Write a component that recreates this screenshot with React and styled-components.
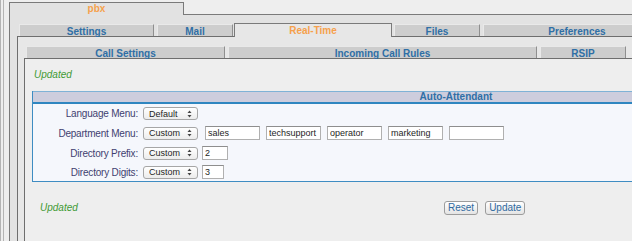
import styled, { createGlobalStyle } from 'styled-components';

const GlobalStyle = createGlobalStyle`
  html, body {
    margin: 0;
    padding: 0;
    overflow: hidden;
    background: #eeeeee;
  }
  body {
    font-family: "Liberation Sans", Arial, sans-serif;
  }
`;

const MAIN_TABS = [
  { label: 'Settings', w: 135 },
  { label: 'Mail', w: 76 },
  { label: 'Real-Time', w: 158, active: true },
  { label: 'Files', w: 86 },
  { label: 'Preferences', w: 188 },
];

const SUB_TABS = [
  { label: 'Call Settings', w: 199 },
  { label: 'Incoming Call Rules', w: 309 },
  { label: 'RSIP', w: 86 },
];

const DEPARTMENTS = ['sales', 'techsupport', 'operator', 'marketing', ''];

function Arrows() {
  return (
    <svg width="5" height="8" viewBox="0 0 5 8">
      <path d="M2.5 0.5 L4.5 3 L0.5 3 Z" fill="#444" />
      <path d="M2.5 7.5 L4.5 5 L0.5 5 Z" fill="#444" />
    </svg>
  );
}

function Select({ value }) {
  return (
    <SelectBox>
      <span>{value}</span>
      <Arrows />
    </SelectBox>
  );
}

function App() {
  return (
    <>
      <GlobalStyle />
      <Frame>
        <TabBar $indent={0} $top={0}>
          <Tab $w={175} $active $top>pbx</Tab>
        </TabBar>
        <Level1>
          <TabBar $indent={2} $top={8}>
            {MAIN_TABS.map((t) => (
              <Tab key={t.label} $w={t.w} $active={t.active}>{t.label}</Tab>
            ))}
          </TabBar>
          <Level2>
            <TabBar $indent={2} $top={9}>
              {SUB_TABS.map((t) => (
                <Tab key={t.label} $w={t.w}>{t.label}</Tab>
              ))}
            </TabBar>
            <Level3>
              <Status $indent={2}>Updated</Status>

              <Panel>
                <PanelHeader>Auto-Attendant</PanelHeader>
                <FormGrid>
                  <Label>Language Menu:</Label>
                  <Fields>
                    <Select value="Default" />
                  </Fields>

                  <Label>Department Menu:</Label>
                  <Fields>
                    <Select value="Custom" />
                    <InputGroup>
                      {DEPARTMENTS.map((d, i) => (
                        <TextInput key={i} $w={55} defaultValue={d} />
                      ))}
                    </InputGroup>
                  </Fields>

                  <Label>Directory Prefix:</Label>
                  <Fields>
                    <Select value="Custom" />
                    <TextInput $w={26} defaultValue="2" />
                  </Fields>

                  <Label>Directory Digits:</Label>
                  <Fields>
                    <Select value="Custom" />
                    <TextInput $w={22} defaultValue="3" />
                  </Fields>
                </FormGrid>
              </Panel>

              <Footer>
                <StatusCell>
                  <Status $indent={8}>Updated</Status>
                </StatusCell>
                <Buttons>
                  <Button>Reset</Button>
                  <Button>Update</Button>
                </Buttons>
              </Footer>
            </Level3>
          </Level2>
        </Level1>
      </Frame>
    </>
  );
}

const Frame = styled.div`
  width: 1000px;
  padding: 2px 0 0 5px;
  border-left: 4px double #b4b4b4;
`;

const TabBar = styled.div`
  display: flex;
  align-items: flex-end;
  gap: 3px;
  padding: ${(p) => p.$top}px 0 0 ${(p) => p.$indent}px;
  position: relative;
  z-index: 1;
`;

const Tab = styled.div`
  box-sizing: border-box;
  flex: none;
  width: ${(p) => p.$w}px;
  height: 12px;
  padding-top: 1px;
  line-height: 11px;
  text-align: center;
  font-size: 10px;
  font-weight: bold;
  color: #2f6fa6;
  background: #cdcdcd;
  border: 1px solid;
  border-color: #e9e9e9 #8f8f8f transparent #e9e9e9;
  border-bottom: none;

  ${(p) => p.$active && `
    height: 14px;
    margin: 0 -1px -1px -2px;
    color: #f6a14c;
    background: #e7e7e7;
    border-color: #7a7a7a;
    line-height: 12px;
  `}

  ${(p) => p.$top && `
    height: 13px;
    margin: 0 0 -1px 0;
    padding-top: 0;
    background: #e2e2e2;
    line-height: 11px;
  `}
`;

const Level1 = styled.div`
  background: #e2e2e2;
  border-left: 1px solid #7a7a7a;
  border-top: 1px solid #7a7a7a;
  padding-left: 7px;
`;

const Level2 = styled.div`
  background: #e7e7e7;
  border-left: 1px solid #6e6e6e;
  border-top: 1px solid #6e6e6e;
  padding-left: 6px;
`;

const Level3 = styled.div`
  background: #eeeeee;
  border-left: 1px solid #6e6e6e;
  border-top: 1px solid #6e6e6e;
  padding: 10px 0 0 7px;
  min-height: 200px;
`;

const Status = styled.div`
  margin-left: ${(p) => p.$indent}px;
  font-size: 10px;
  line-height: 12px;
  font-style: italic;
  color: #3f9a35;
`;

const Panel = styled.div`
  width: 846px;
  margin-top: 10px;
  border-left: 1px solid #3e8cc2;
  border-bottom: 1px solid #3e8cc2;
  background: #f5f7fc;
`;

const PanelHeader = styled.div`
  height: 10px;
  line-height: 10px;
  text-align: center;
  font-size: 10px;
  font-weight: bold;
  color: #2f6fa6;
  background: #cdcddd;
  border-top: 1px solid #7fb2d6;
  border-bottom: 2px solid #2f86c0;
`;

const FormGrid = styled.div`
  display: grid;
  grid-template-columns: 105px 1fr;
  grid-template-rows: 19px 20px 20px 18px;
  column-gap: 5px;
  align-items: center;
`;

const Label = styled.div`
  text-align: right;
  font-size: 10px;
  letter-spacing: -0.2px;
  color: #3f3f70;
  white-space: nowrap;
`;

const Fields = styled.div`
  display: flex;
  align-items: center;
  gap: 4px;
`;

const InputGroup = styled.div`
  display: flex;
  gap: 6px;
  margin-left: 3px;
`;

const SelectBox = styled.div`
  box-sizing: border-box;
  display: flex;
  align-items: center;
  justify-content: space-between;
  width: 55px;
  height: 13px;
  padding: 0 5px 0 5px;
  border: 1px solid #a6a6a6;
  border-radius: 3px;
  background: linear-gradient(#ffffff, #ececec);
  font-size: 9px;
  color: #1e1e1e;
`;

const TextInput = styled.input`
  box-sizing: border-box;
  width: ${(p) => p.$w}px;
  height: 14px;
  margin: 0;
  padding: 0 2px;
  border: 1px solid #b0b0b0;
  border-top-color: #8e8e8e;
  background: #fff;
  font-family: "Liberation Sans", Arial, sans-serif;
  font-size: 9px;
  color: #1e1e1e;
  outline: none;
`;

const Footer = styled.div`
  display: flex;
  align-items: center;
  margin-top: 19px;
`;

const StatusCell = styled.div`
  width: 412px;
`;

const Buttons = styled.div`
  display: flex;
  gap: 7px;
`;

const Button = styled.button`
  height: 14px;
  padding: 0 3px;
  border: 1px solid #9c9c9c;
  border-radius: 3px;
  background: linear-gradient(#ffffff, #e4e4e4);
  font-family: "Liberation Sans", Arial, sans-serif;
  font-size: 10px;
  line-height: 12px;
  color: #2f6aa0;
`;

export default App;
